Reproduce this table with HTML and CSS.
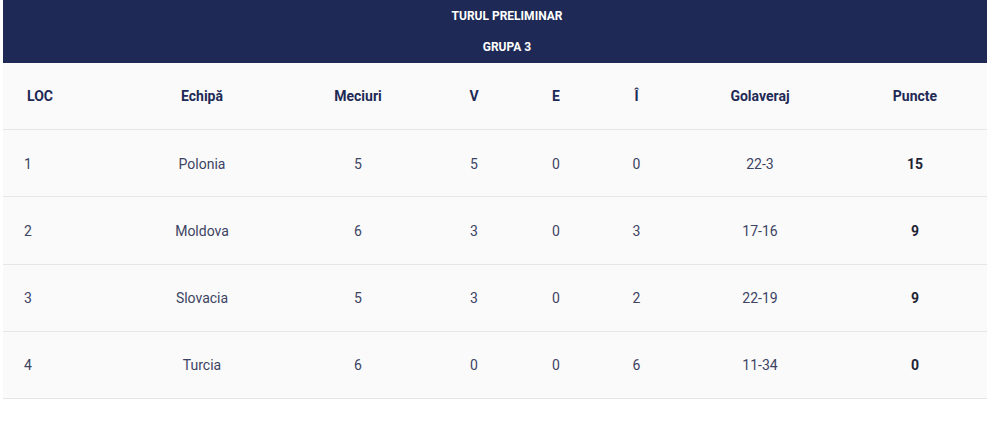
FILE: index.html
```html
<!DOCTYPE html>
<html lang="ro">
<head>
<meta charset="utf-8">
<title>Turul preliminar - Grupa 3</title>
<link rel="stylesheet" href="styles.css">
</head>
<body>
<div class="standings">
  <div class="title">
    <div class="title-line">TURUL PRELIMINAR</div>
    <div class="title-line">GRUPA 3</div>
  </div>
  <div class="row head">
    <div class="cell left">LOC</div>
    <div class="cell">Echipă</div>
    <div class="cell">Meciuri</div>
    <div class="cell">V</div>
    <div class="cell">E</div>
    <div class="cell">Î</div>
    <div class="cell">Golaveraj</div>
    <div class="cell">Puncte</div>
  </div>
  <div class="row body">
    <div class="cell left">1</div>
    <div class="cell">Polonia</div>
    <div class="cell">5</div>
    <div class="cell">5</div>
    <div class="cell">0</div>
    <div class="cell">0</div>
    <div class="cell">22-3</div>
    <div class="cell pts">15</div>
  </div>
  <div class="row body">
    <div class="cell left">2</div>
    <div class="cell">Moldova</div>
    <div class="cell">6</div>
    <div class="cell">3</div>
    <div class="cell">0</div>
    <div class="cell">3</div>
    <div class="cell">17-16</div>
    <div class="cell pts">9</div>
  </div>
  <div class="row body">
    <div class="cell left">3</div>
    <div class="cell">Slovacia</div>
    <div class="cell">5</div>
    <div class="cell">3</div>
    <div class="cell">0</div>
    <div class="cell">2</div>
    <div class="cell">22-19</div>
    <div class="cell pts">9</div>
  </div>
  <div class="row body">
    <div class="cell left">4</div>
    <div class="cell">Turcia</div>
    <div class="cell">6</div>
    <div class="cell">0</div>
    <div class="cell">0</div>
    <div class="cell">6</div>
    <div class="cell">11-34</div>
    <div class="cell pts">0</div>
  </div>
</div>
</body>
</html>
```

FILE: styles.css
```css
html, body {
  margin: 0;
  padding: 0;
  background: #ffffff;
}
body {
  padding-left: 3px;
  font-family: Roboto, "Liberation Sans", Arial, sans-serif;
}
.standings {
  width: 984px;
  background: #fafafa;
}
.title {
  background: #1e2a55;
  color: #ffffff;
  height: 63px;
  display: flex;
  flex-direction: column;
  padding-left: 24px;
}
.title-line {
  height: 31.5px;
  display: flex;
  align-items: center;
  justify-content: center;
  font-size: 12px;
  font-weight: 700;
}
.row {
  display: grid;
  grid-template-columns: 117px 164px 148px 84px 80px 81px 166px 144px;
  height: 66px;
  border-bottom: 1px solid #e6e6e6;
  align-items: center;
  font-size: 14px;
  color: #3d4363;
}
.row.head {
  color: #1e2a55;
  font-weight: 700;
}
.row.body {
  height: 66.25px;
  padding-top: 1px;
  box-sizing: border-box;
  height: 67.25px;
}
.cell {
  text-align: center;
}
.cell.left {
  text-align: left;
  padding-left: 24px;
}
.row.body .cell.left {
  padding-left: 21px;
}
.cell.pts {
  font-weight: 700;
  color: #1f2435;
}
```
